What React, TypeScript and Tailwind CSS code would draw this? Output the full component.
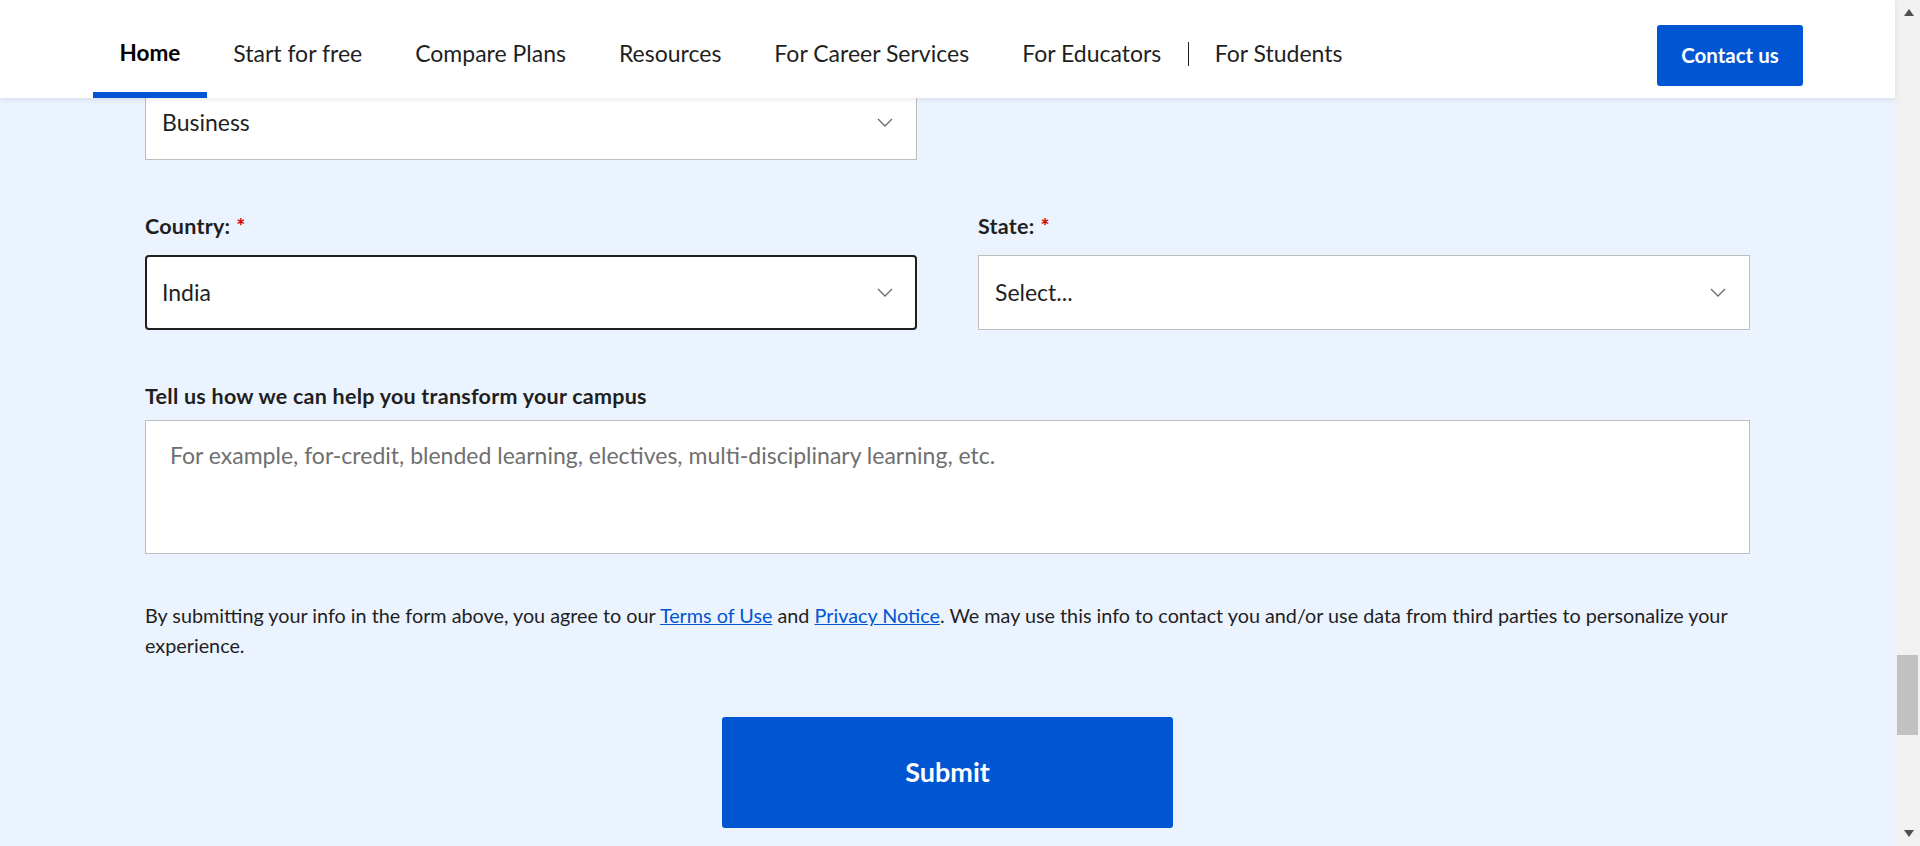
import React from 'react'

const navItems = ['Home', 'Start for free', 'Compare Plans', 'Resources', 'For Career Services', 'For Educators']

function Chevron() {
    return (
        <svg width="16" height="9" viewBox="0 0 16 9" fill="none">
            <polyline points="1,1 8,8 15,1" stroke="#6a6a6a" strokeWidth="1.3" />
        </svg>
    )
}

function SelectBox({ value, focused }: { value: string; focused?: boolean }) {
    return (
        <div
            className={
                focused
                    ? 'h-[75px] bg-white border-2 border-[#1f1f1f] rounded-[4px] flex items-center justify-between pl-[15px] pr-[22px]'
                    : 'h-[75px] bg-white border border-[#bdbdbd] flex items-center justify-between pl-[16px] pr-[23px]'
            }
        >
            <span className="text-[23px] text-[#1f1f1f]">{value}</span>
            <Chevron />
        </div>
    )
}

function Label({ children, required }: { children: React.ReactNode; required?: boolean }) {
    return (
        <div className="text-[21.5px] font-bold leading-[24px] tracking-[0.25px] text-[#1f1f1f]">
            {children}
            {required && <span className="text-[#d30001] ml-[6px]">*</span>}
        </div>
    )
}

export default function App() {
    return (
        <div className="w-[1920px] h-[846px] flex overflow-hidden bg-[#ebf3fe] font-['Lato',sans-serif]">
            <div className="flex-1 flex flex-col">
                {/* Header */}
                <header className="h-[98px] shrink-0 bg-white relative z-10 shadow-[0_2px_6px_rgba(0,0,0,0.08)] flex items-start justify-between pl-[93px] pr-[92px]">
                    <nav className="h-full flex items-stretch">
                        {navItems.map((item) => (
                            <div key={item} className="relative flex items-center px-[26.5px] pt-[8px]">
                                <span className={item === 'Home' ? 'text-[22.5px] font-bold text-black' : 'text-[23px] text-[#1f1f1f]'}>
                                    {item}
                                </span>
                                {item === 'Home' && <span className="absolute left-0 right-0 bottom-0 h-[6px] bg-[#0056d2]" />}
                            </div>
                        ))}
                        <div className="flex items-center pt-[9px]">
                            <span className="w-px h-[24px] bg-[#1f1f1f]" />
                        </div>
                        <div className="flex items-center px-[26px] pt-[8px]">
                            <span className="text-[23px] text-[#1f1f1f]">For Students</span>
                        </div>
                    </nav>
                    <button className="mt-[25px] w-[146px] h-[61px] rounded-[3px] bg-[#0056d2] text-white text-[20.5px] font-bold">
                        Contact us
                    </button>
                </header>

                {/* Form */}
                <main className="flex-1 overflow-hidden">
                    <div className="w-[1605px] mx-auto flex flex-col">
                        <div className="-mt-[13px] w-[772px]">
                            <SelectBox value="Business" />
                        </div>

                        <div className="mt-[54px] grid grid-cols-2 gap-x-[61px]">
                            <div>
                                <Label required>Country:</Label>
                                <div className="mt-[17px]">
                                    <SelectBox value="India" focused />
                                </div>
                            </div>
                            <div>
                                <Label required>State:</Label>
                                <div className="mt-[17px]">
                                    <SelectBox value="Select..." />
                                </div>
                            </div>
                        </div>

                        <div className="mt-[54px]">
                            <Label>Tell us how we can help you transform your campus</Label>
                        </div>
                        <textarea
                            className="mt-[12px] h-[134px] resize-none bg-white border border-[#bdbdbd] pl-[24px] pt-[20px] text-[23px] leading-[28px] text-[#1f1f1f] placeholder:text-[#6f6f6f] outline-none"
                            placeholder="For example, for-credit, blended learning, electives, multi-disciplinary learning, etc."
                        />

                        <p className="mt-[46px] text-[19.8px] leading-[30px] text-[#1f1f1f]">
                            By submitting your info in the form above, you agree to our{' '}
                            <a className="text-[#0056d2] underline">Terms of Use</a> and{' '}
                            <a className="text-[#0056d2] underline">Privacy Notice</a>. We may use this info to contact you and/or use
                            data from third parties to personalize your experience.
                        </p>

                        <button className="mt-[57px] self-center w-[451px] h-[111px] rounded-[3px] bg-[#0056d2] text-white text-[27px] font-bold">
                            Submit
                        </button>
                    </div>
                </main>
            </div>

            {/* Scrollbar */}
            <div className="w-[25px] shrink-0 bg-[#f1f1f1] flex flex-col items-center justify-between py-[9px] pl-[2px]">
                <svg width="10" height="7" viewBox="0 0 10 7">
                    <polygon points="5,0 10,7 0,7" fill="#505050" />
                </svg>
                <div className="flex-1 w-full flex flex-col">
                    <div className="mt-[639px] w-[21px] h-[80px] bg-[#c1c1c1]" />
                </div>
                <svg width="10" height="7" viewBox="0 0 10 7">
                    <polygon points="0,0 10,0 5,7" fill="#505050" />
                </svg>
            </div>
        </div>
    )
}
